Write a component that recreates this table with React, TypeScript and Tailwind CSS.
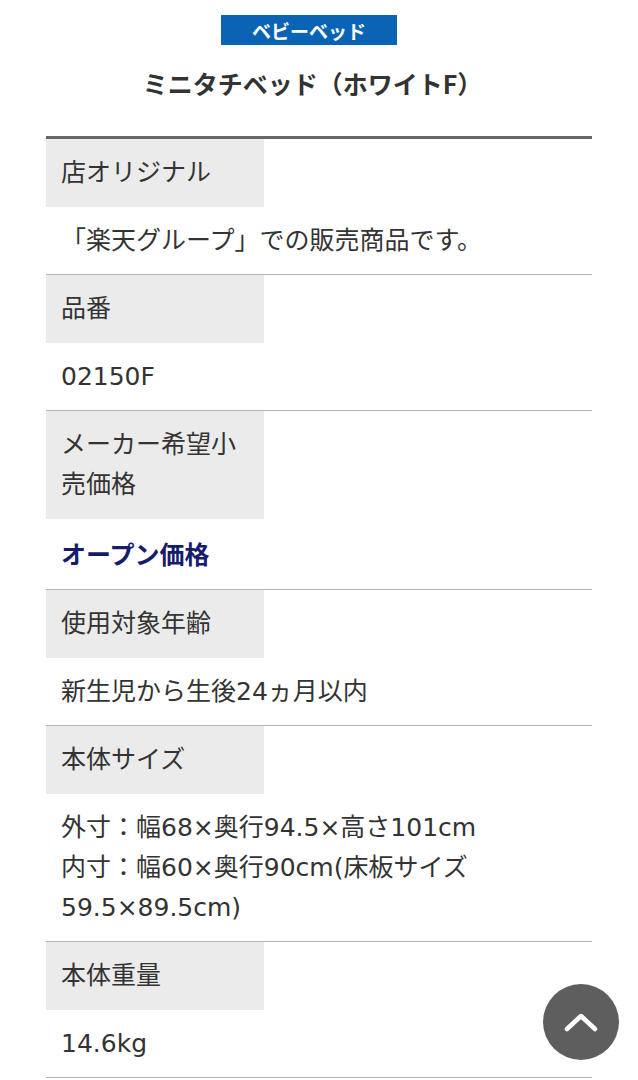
import React from "react";

const font = { fontFamily: '"DejaVu Sans", "Noto Sans CJK JP", sans-serif' };
const jp = { fontFamily: '"Noto Sans CJK JP", "Noto Sans", sans-serif' };

function Row({ label, children }: { label: React.ReactNode; children: React.ReactNode }) {
  return (
    <div className="border-b border-[#b5b5b5]">
      <div className="w-[218px] bg-[#ebebeb] px-[15px] py-[14px] text-[25px] leading-[40px] text-[#333]">
        {label}
      </div>
      <div className="px-[15px] pt-[14px] pb-[13px] text-[25px] leading-[40px] text-[#333]">{children}</div>
    </div>
  );
}

export default function App() {
  return (
    <div className="relative min-h-[1080px] bg-white pt-[15px]" style={font}>
      <div
        className="ml-[221px] flex h-[30px] w-[176px] items-center justify-center bg-[#0b63b6] text-[19px] font-bold leading-none text-white"
        style={jp}
      >
        ベビーベッド
      </div>
      <h1 className="mt-[18px] pr-[13px] text-center text-[25px] font-bold leading-[40px] text-[#333]" style={jp}>
        ミニタチベッド（ホワイトF）
      </h1>
      <div className="mx-[46px] mt-[33px] border-t-[3px] border-[#666]">
        <Row label="店オリジナル">「楽天グループ」での販売商品です。</Row>
        <Row label="品番">02150F</Row>
        <Row label={<>メーカー希望小<br />売価格</>}>
          <span className="font-bold text-[#161c6b]" style={jp}>オープン価格</span>
        </Row>
        <Row label="使用対象年齢">新生児から生後24ヵ月以内</Row>
        <Row label="本体サイズ">
          外寸：幅68×奥行94.5×高さ101cm
          <br />
          内寸：幅60×奥行90cm(床板サイズ
          <br />
          59.5×89.5cm)
        </Row>
        <Row label="本体重量">14.6kg</Row>
      </div>
      <button className="fixed bottom-[20px] right-[19px] flex h-[76px] w-[76px] items-center justify-center rounded-full bg-[#555]/95">
        <svg width="34" height="20" viewBox="0 0 34 20" fill="none">
          <path d="M3 17 L17 4 L31 17" stroke="white" strokeWidth="4.5" strokeLinecap="round" strokeLinejoin="round" />
        </svg>
      </button>
    </div>
  );
}
